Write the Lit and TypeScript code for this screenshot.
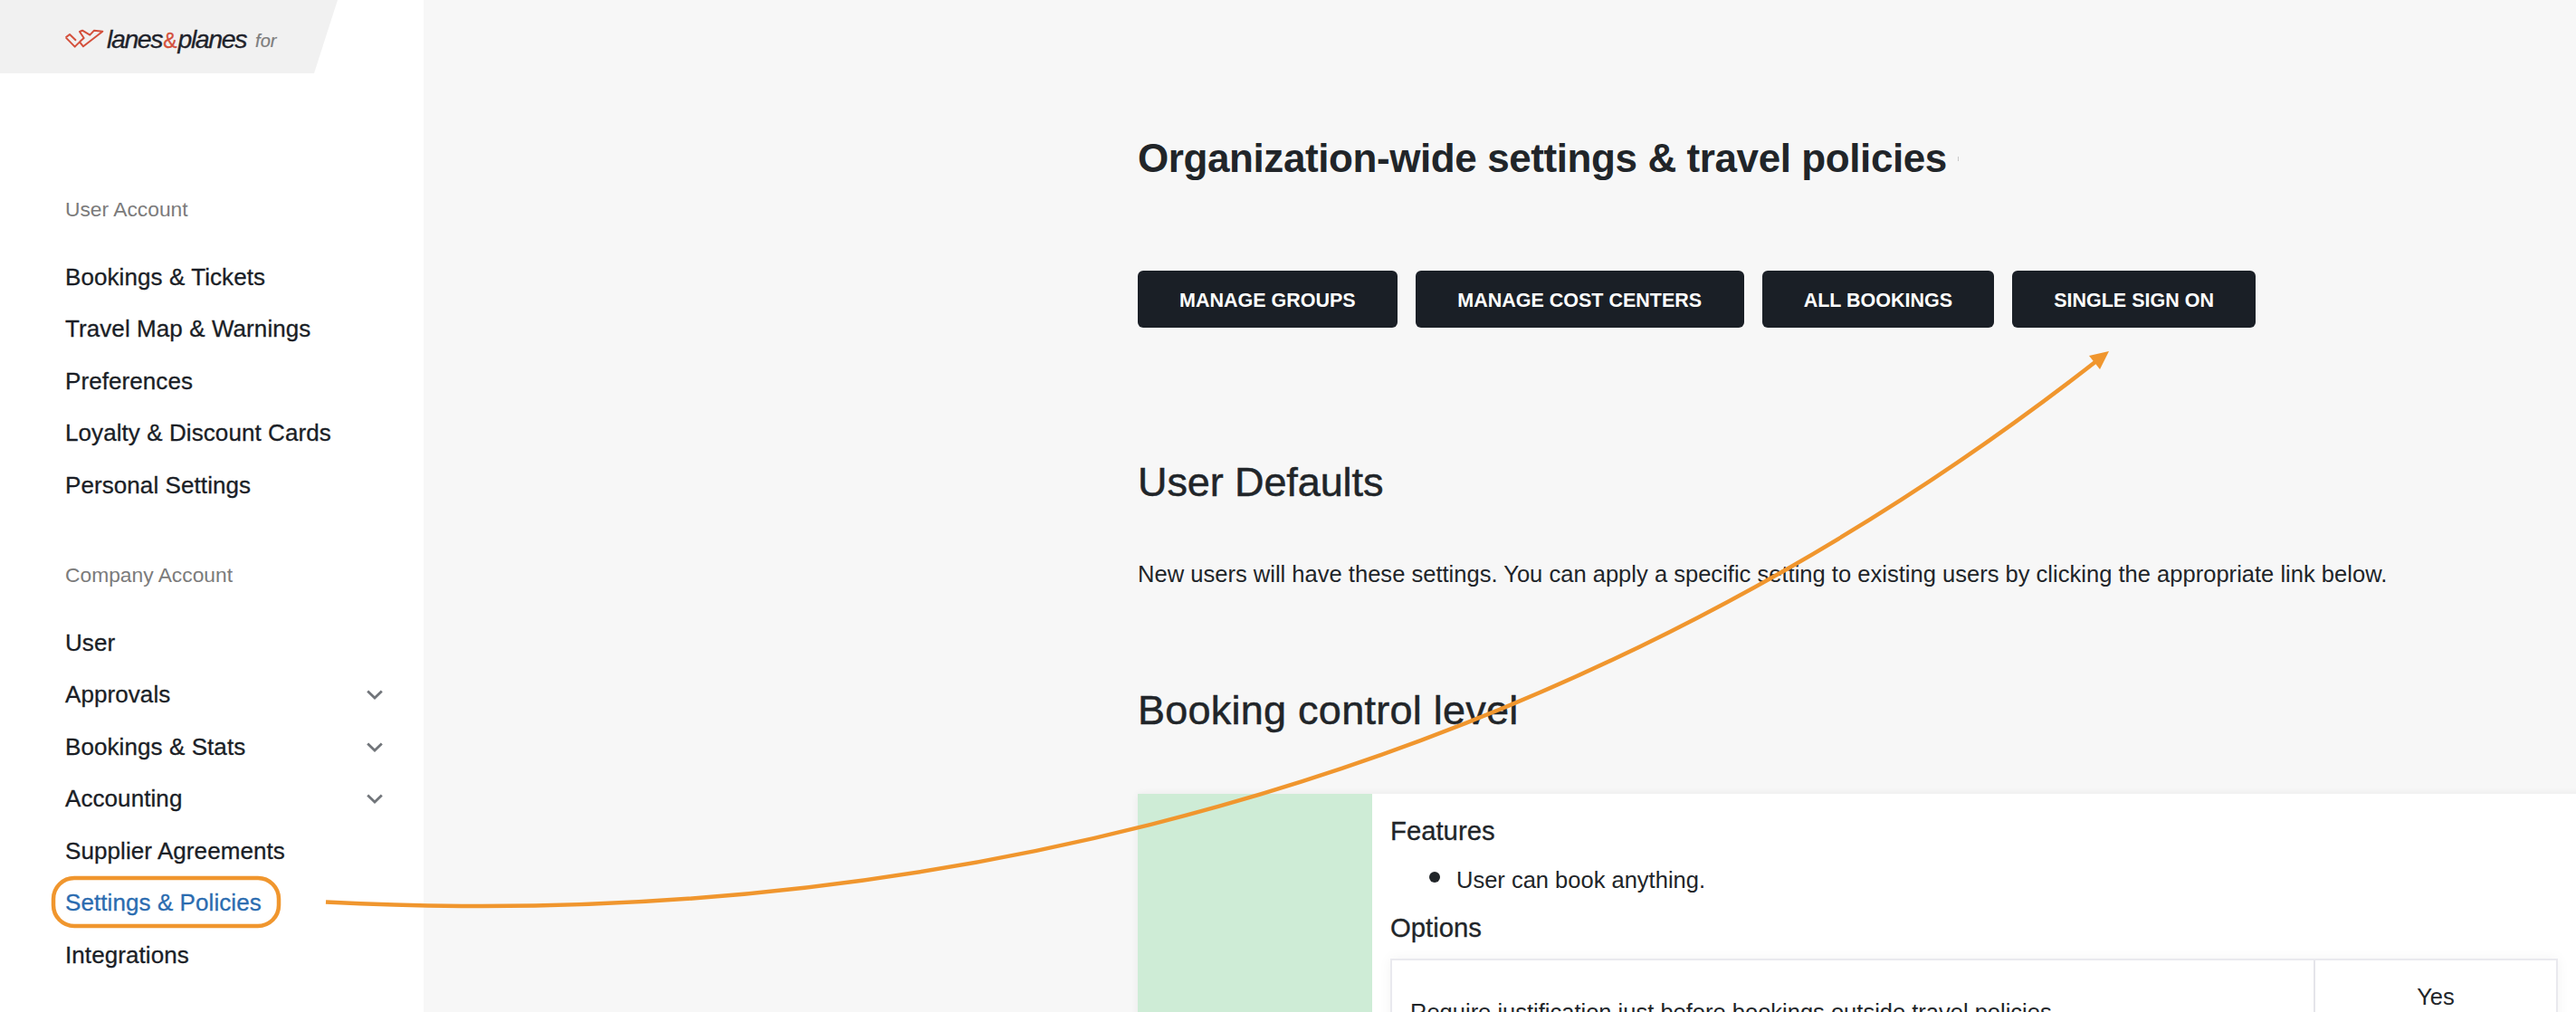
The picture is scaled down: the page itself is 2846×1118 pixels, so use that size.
import { LitElement, html, css, svg } from "lit";
import { customElement } from "lit/decorators.js";

const chevron = html`<svg class="chev" viewBox="0 0 18 11" width="18" height="11"><path d="M1.2 1.5 L9 9 L16.8 1.5" fill="none" stroke="#71757a" stroke-width="2.8"/></svg>`;

@customElement("app-root")
export class AppRoot extends LitElement {
  static styles = css`
    :host { display: block; width: 2846px; height: 1118px; overflow: hidden; position: relative; background: #f7f7f7; font-family: "Liberation Sans", Arial, sans-serif; color: #212529; }
    .page { display: flex; height: 1118px; }
    .side { width: 468px; flex: none; background: #fff; height: 1118px; box-sizing: border-box; }
    .brand { height: 81px; width: 373px; background: #f1f1f1; clip-path: polygon(0 0, 373px 0, 347px 81px, 0 81px); display: flex; align-items: center; padding-left: 68px; box-sizing: border-box; }
    .brand svg { flex: none; margin-top: 3px; }
    .wordmark { font-style: italic; font-size: 28.5px; letter-spacing: -1.4px; color: #1f232b; line-height: 1; -webkit-text-stroke: 0.3px #1f232b; margin: 5px 0 0 -2px; }
    .amp { color: #d4503c; -webkit-text-stroke: 0.3px #d4503c; font-size: 23px; font-style: normal; letter-spacing: 0; margin: 0 1px 0 1px; }
    .for { font-style: italic; font-size: 20px; color: #7d7d7d; margin-left: 10px; margin-top: 9px; -webkit-text-stroke: 0.2px #7d7d7d; }
    .label { font-size: 22.8px; color: #7b7b7b; line-height: 24px; padding-left: 72px; }
    .label.first { margin-top: 138px; }
    .label.second { margin-top: 58px; }
    nav { display: flex; flex-direction: column; margin-top: 34.5px; }
    .item { height: 57.5px; display: flex; align-items: center; justify-content: space-between; padding: 0 45px 0 72px; font-size: 26px; letter-spacing: 0.08px; color: #1a1e26; box-sizing: border-box; -webkit-text-stroke: 0.3px currentColor; }
    .item.active { color: #2b6cb0; }
    main { flex: 1; min-width: 0; padding-left: 789px; overflow: hidden; }
    h1 { margin: 147px 0 0; font-size: 44px; letter-spacing: -0.41px; line-height: 56px; font-weight: 700; color: #212529; white-space: nowrap; display: flex; align-items: center; }
    .tick { width: 1px; height: 5px; background: #c9c9c9; margin: 0 0 0 12px; }
    .btns { display: flex; gap: 20px; margin-top: 96px; }
    .btn { height: 63px; border-radius: 6px; background: #1a1f26; color: #fff; font-size: 21.5px; font-weight: 700; display: flex; align-items: center; padding: 4px 46px 0; box-sizing: border-box; white-space: nowrap; }
    .btn.wide { padding: 4px 46.5px 0; }
    h2 { margin: 0; font-weight: 400; font-size: 45px; line-height: 56px; color: #212529; white-space: nowrap; -webkit-text-stroke: 0.5px #212529; }
    h2.defaults { margin-top: 143px; letter-spacing: -0.1px; }
    .intro { margin: 58px 0 0; font-size: 25.55px; line-height: 30px; white-space: nowrap; }
    h2.level { margin-top: 108px; letter-spacing: 0.25px; }
    .card { display: flex; width: 1700px; margin-top: 64px; background: #fff; box-shadow: 0 0 8px rgba(0,0,0,.06); height: 300px; }
    .tone { width: 259px; flex: none; background: #ceecd6; }
    .body { width: 1290px; padding: 24px 0 0 20px; }
    h3 { margin: 0; font-size: 29.3px; line-height: 34px; font-weight: 400; color: #212529; -webkit-text-stroke: 0.3px #212529; }
    ul { margin: 19px 0 18px; padding: 0 0 0 43px; font-size: 25.5px; line-height: 36px; list-style: none; }
    li { display: flex; align-items: center; gap: 18px; }
    .dot { width: 12px; height: 12px; border-radius: 50%; background: #212529; margin-top: -6px; flex: none; }
    .opt { display: flex; margin-top: 17px; width: 1290px; border: 2px solid #e9e9ee; box-sizing: border-box; box-shadow: 0 0 14px rgba(0,0,0,.05); height: 200px; font-size: 25.5px; }
    .opt-l { width: 1020px; flex: none; padding: 43px 0 0 20px; box-sizing: border-box; border-right: 2px solid #e4e4ea; white-space: nowrap; }
    .opt-r { flex: 1; text-align: center; padding-top: 26px; }
    .overlay { position: absolute; inset: 0; pointer-events: none; }
  `;

  render() {
    const user = ["Bookings & Tickets", "Travel Map & Warnings", "Preferences", "Loyalty & Discount Cards", "Personal Settings"];
    const company: [string, boolean][] = [["User", false], ["Approvals", true], ["Bookings & Stats", true], ["Accounting", true], ["Supplier Agreements", false], ["Settings & Policies", false], ["Integrations", false]];
    return html`
      <div class="page">
        <aside class="side">
          <div class="brand">
            <svg width="52" height="28" viewBox="0 0 156 84"><path d="M14 40 L44 71 L60 55 L72 70 L136 20 L108 17 L94 32 L69 17 L60 21 L74 42 L60 55 M14 40 L27 30 L48 50" fill="none" stroke="#d4503c" stroke-width="6" stroke-linejoin="round"/></svg>
            <span class="wordmark">lanes<span class="amp">&amp;</span>planes</span><span class="for">for</span>
          </div>
          <div class="label first">User Account</div>
          <nav>${user.map((t) => html`<div class="item">${t}</div>`)}</nav>
          <div class="label second">Company Account</div>
          <nav>${company.map(([t, c]) => html`<div class="item ${t === "Settings & Policies" ? "active" : ""}">${t}${c ? chevron : ""}</div>`)}</nav>
        </aside>
        <main>
          <h1>Organization-wide settings &amp; travel policies<span class="tick"></span></h1>
          <div class="btns">
            <div class="btn">MANAGE GROUPS</div><div class="btn wide">MANAGE COST CENTERS</div><div class="btn">ALL BOOKINGS</div><div class="btn">SINGLE SIGN ON</div>
          </div>
          <h2 class="defaults">User Defaults</h2>
          <p class="intro">New users will have these settings. You can apply a specific setting to existing users by clicking the appropriate link below.</p>
          <h2 class="level">Booking control level</h2>
          <div class="card">
            <div class="tone"></div>
            <div class="body">
              <h3>Features</h3>
              <ul><li><span class="dot"></span>User can book anything.</li></ul>
              <h3>Options</h3>
              <div class="opt"><div class="opt-l">Require justification just before bookings outside travel policies</div><div class="opt-r">Yes</div></div>
            </div>
          </div>
        </main>
      </div>
      <svg class="overlay" width="2846" height="1118" viewBox="0 0 2846 1118">
        ${svg`<rect x="59" y="970" width="249" height="53" rx="23" fill="none" stroke="#f0962e" stroke-width="4.5"/>
        <path d="M360 996.5 C 1000 1030, 1700 880, 2316 399" fill="none" stroke="#f0962e" stroke-width="4.5"/>
        <polygon points="2330,388 2308,393 2320,408" fill="#f0962e"/>`}
      </svg>
    `;
  }
}
